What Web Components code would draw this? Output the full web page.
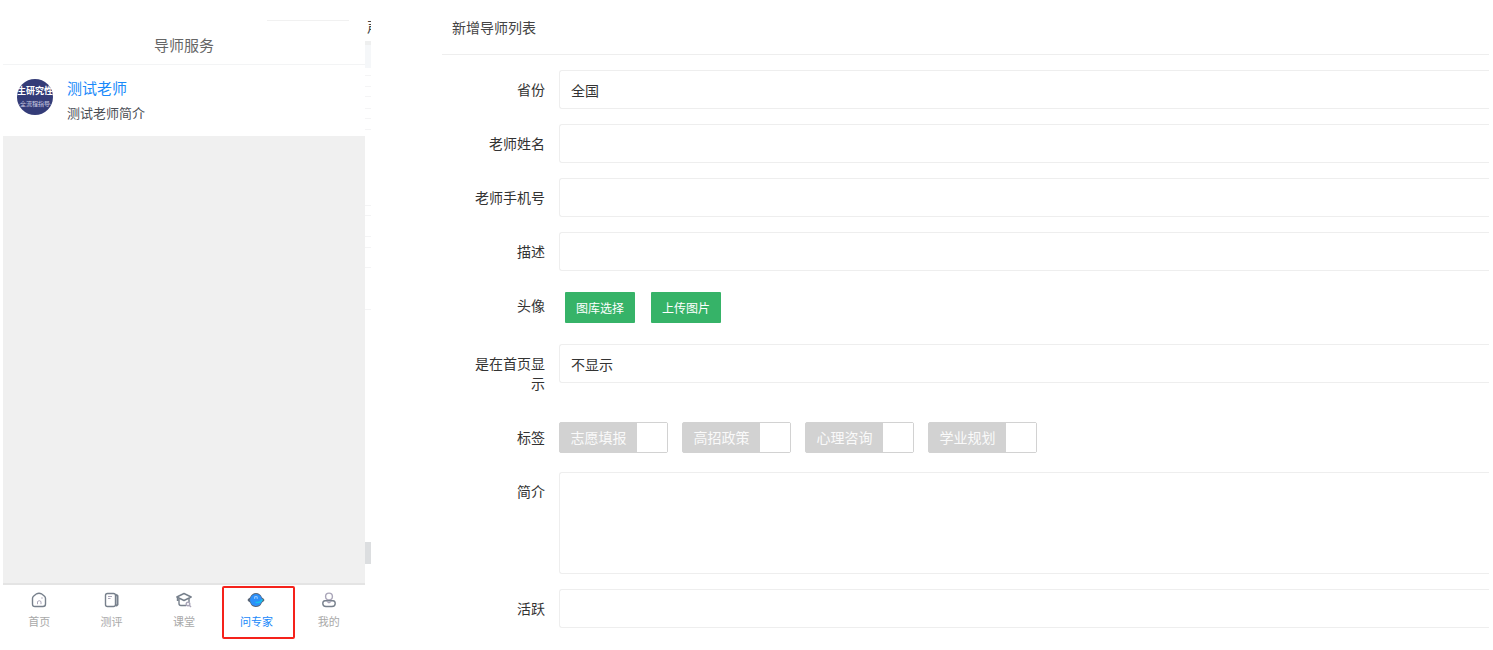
<!DOCTYPE html>
<html lang="zh-CN">
<head>
<meta charset="utf-8">
<title>导师服务</title>
<style>
body { margin: 0; background: #fff; font-family: "Noto Sans CJK SC", sans-serif; }
</style>
</head>
<body>
<mentor-page></mentor-page>
<script>
const define = (name, html, setup) => {
  const template = document.createElement('template');
  template.innerHTML = html;
  customElements.define(name, class extends HTMLElement {
    constructor() {
      super();
      this.attachShadow({ mode: 'open' }).append(template.content.cloneNode(true));
    }
    connectedCallback() { if (setup) setup(this, this.shadowRoot); }
  });
};

define('mentor-card', `
<style>
:host { display: flex; gap: 14px; height: 71px; padding: 12px 14px 0; box-sizing: border-box; background: #fff; }
svg { width: 36px; height: 36px; flex: none; margin-top: 2px; }
a { display: block; font-size: 15px; line-height: 22px; color: #1989fa; text-decoration: none; }
p { margin: 3px 0 0; font-size: 13px; line-height: 22px; color: #4a4e54; }
</style>
<svg viewBox="0 0 36 36" role="img" aria-label="头像">
  <defs><clipPath id="c"><circle cx="18" cy="18" r="18"/></clipPath></defs>
  <g clip-path="url(#c)" fill="#fff" font-family="Noto Sans CJK SC, sans-serif" text-anchor="middle">
    <rect width="36" height="36" fill="#343c78"/>
    <text x="18" y="15" font-size="9" font-weight="700">生研究性</text>
    <text x="18" y="27" font-size="6" fill="#c9cbe2">-全流程指导-</text>
  </g>
</svg>
<div><a href="#mentor"><slot name="name"></slot></a><p><slot></slot></p></div>`);

define('tab-item', `
<style>
:host { display: block; position: relative; flex: 1; min-width: 0; color: #a9a9a9; }
:host([current]) { color: #1989fa; }
/* frame drawn over the tab, slightly into its right neighbour */
:host([current])::after { content: ""; position: absolute; inset: 1px -2px 11px 2px; border: 2px solid #f5221b; border-radius: 2px; pointer-events: none; }
a { display: flex; flex-direction: column; align-items: center; gap: 4px; padding-top: 6px; color: inherit; text-decoration: none; font-size: 11px; line-height: 16px; }
::slotted(svg) { width: 18px; height: 18px; display: block; }
</style>
<a href="#tab"><slot name="icon"></slot><slot></slot></a>`);

define('mentor-phone', `
<style>
:host { display: flex; flex-direction: column; flex: 0 0 362px; margin-left: 3px; }
header { box-sizing: border-box; height: 65px; border-bottom: 1px solid #f3f4f5; display: flex; flex-direction: column; }
hr { width: 82px; margin: 20px 16px 0 auto; border: 0; border-top: 1px solid #f1f1f1; flex: none; }
h1 { margin: 13px 0 0; font-size: 15px; line-height: 22px; font-weight: 400; color: #666; text-align: center; }
main { flex: 1; background: #f0f0f0; }
nav { display: flex; height: 67px; box-sizing: border-box; background: #fff; border-top: 2px solid #e4e4e4; }
</style>
<header><hr><h1>导师服务</h1></header>
<main><mentor-card><span slot="name">测试老师</span>测试老师简介</mentor-card></main>
<nav>
  <tab-item><svg slot="icon" viewBox="0 0 18 18" fill="none" stroke="#77808c" stroke-width="1.400"><path d="M2.500 7.400Q2.500 6.200 3.500 5.200L6.500 2.800Q9 1.700 11.500 2.800L14.500 5.200Q15.500 6.200 15.500 7.400V13Q15.500 15.500 13 15.500H5Q2.500 15.500 2.500 13Z"/><path d="M7.500 13.200V10.500Q9.200 8.800 11 10.500V13.200M11.200 7H12.800" stroke="#aaa6b9" stroke-width="1"/></svg>首页</tab-item>
  <tab-item><svg slot="icon" viewBox="0 0 18 18" fill="none" stroke="#77808c" stroke-width="1.400"><rect x="2.500" y="2.500" width="10" height="13" rx="2"/><path d="M13 3.500L14.500 5V13.500L13 15" stroke-width="2"/><path d="M5 5.500H9M5 7.500H7.500" stroke="#aaa6b9" stroke-width="1"/></svg>测评</tab-item>
  <tab-item><svg slot="icon" viewBox="0 0 18 18" fill="none" stroke="#77808c" stroke-width="1.400" stroke-linejoin="round"><path d="M1.800 6L9 2.500L16.200 6L9 9.500Z"/><path d="M4 7.500V12.500Q4 14.500 6 14.500H11M14 7V11M2.500 7V10"/><circle cx="13" cy="13" r="1.800" stroke="#aaa6b9"/><path d="M14.300 14.300L16 16" stroke="#aaa6b9"/></svg>课堂</tab-item>
  <tab-item current><svg slot="icon" viewBox="0 0 18 18"><path d="M.5 9Q.8 7.800 3 6.600Q4.800 2 9 2Q13.200 2 15 6.600Q17.200 7.800 17.500 9Q17.200 10.200 15 11.400Q13.200 16 9 16Q4.800 16 3 11.400Q.8 10.200 .5 9Z" fill="#596678"/><circle cx="9" cy="9" r="6" fill="#2c90fa"/><path d="M7.700 7.900V5.700H10.200V7.900" fill="none" stroke="#a3cefb"/><path d="M8.500 11.200Q13.500 12.500 15.500 8.200" fill="none" stroke="#19c3ec" stroke-width="1.500"/></svg>问专家</tab-item>
  <tab-item><svg slot="icon" viewBox="0 0 18 18" fill="none" stroke-width="1.400"><circle cx="9" cy="5.500" r="3.400" stroke="#aaa6b9"/><path d="M5 9.800Q2.800 10 2.800 12.500Q2.800 15.500 6 15.500H12Q15.200 15.500 15.200 12.500Q15.200 10 13 9.800Z" stroke="#77808c"/><path d="M7 10Q9 13.500 11 10" stroke="#aaa6b9"/></svg>我的</tab-item>
</nav>`);

define('page-sliver', `
<style>
:host { display: block; flex: 0 0 6px; width: 6px; overflow: hidden; }
span { display: block; padding: 16px 0 0 2px; width: 14px; height: 25px; font-size: 14px; line-height: 20px; color: #444; }
svg { display: block; }
</style>
<span>声</span>
<svg width="6" height="523" viewBox="0 41 6 523" shape-rendering="crispEdges">
  <path d="M0 45H6V68H0Z" fill="#f5f7f9"/><path d="M0 41H6V45H0Z" fill="#eeefef"/>
  <path d="M0 75.500H6M0 86.500H6M0 96.500H6M0 108.500H6M0 118.500H6M0 129.500H6M0 205.500H6M0 215.500H6M0 236.500H6M0 247.500H6M0 267.500H6M0 309.500H6" stroke="#f4f4f5"/>
  <path d="M0 542H6V564H0Z" fill="#dcdee0"/>
</svg>`);

define('form-row', `
<style>
:host { display: grid; grid-template-columns: 103px minmax(0, 1fr); column-gap: 14px; min-height: 39px; }
:host([kind=buttons]) { min-height: 43px; }
:host([kind=buttons]) .field { display: flex; gap: 16px; padding: 6px 0 0 6px; }
:host([kind=tags]) .field { display: flex; gap: 14px; padding-top: 4px; }
label { padding: 9px 0 10px 28px; font-size: 14px; line-height: 20px; color: #333; text-align: right; }
input, select, textarea { display: block; box-sizing: border-box; width: 100%; height: 39px; margin: 0; padding: 0 11px; border: 1px solid #eee; border-right: 0; border-radius: 3px 0 0 3px; background: #fff; font: 14px/20px "Noto Sans CJK SC", sans-serif; color: #333; outline: 0; appearance: none; resize: none; }
textarea { height: 102px; padding: 9px 11px; }
</style>
<label for="control"></label><div class="field"><slot></slot></div>`, (host, root) => {
  const label = root.querySelector('label');
  label.textContent = host.getAttribute('label');
  const kind = host.getAttribute('kind') || 'input';
  if (kind === 'buttons' || kind === 'tags') {
    label.removeAttribute('for');
    label.id = 'caption';
    const field = root.querySelector('.field');
    field.setAttribute('role', 'group');
    field.setAttribute('aria-labelledby', 'caption');
    return;
  }
  const control = document.createElement(kind);
  control.id = 'control';
  if (kind === 'select') control.add(new Option(host.getAttribute('value')));
  root.querySelector('.field').replaceChildren(control);
});

define('green-button', `
<style>
:host { display: block; }
button { display: block; width: 70px; height: 31px; margin: 0; padding: 0; border: 0; border-radius: 1px; background: #36b368; color: #fff; font: 12px/31px "Noto Sans CJK SC", sans-serif; cursor: pointer; }
</style>
<button type="button"><slot></slot></button>`);

define('tag-switch', `
<style>
:host { display: block; }
label { display: flex; box-sizing: border-box; width: 109px; height: 31px; border: 1px solid #d2d2d2; border-radius: 2px; background: #d2d2d2; color: #fafafa; font-size: 14px; line-height: 28px; cursor: pointer; }
span { flex: 1; text-align: center; }
input { appearance: none; width: 30px; height: 29px; margin: 0; background: #fff; order: 1; }
label:has(input:checked) { background: #36b368; border-color: #36b368; }
</style>
<label><input type="checkbox"><span><slot></slot></span></label>`);

define('mentor-form', `
<style>
:host { display: block; flex: 1; min-width: 0; margin: 0 4px 0 71px; }
h2 { margin: 0; box-sizing: border-box; height: 55px; padding: 17px 10px 0; border-bottom: 1px solid #eee; font-size: 14px; line-height: 20px; font-weight: 400; color: #444; }
form { display: flex; flex-direction: column; gap: 15px; padding: 15px 0; }
</style>
<h2>新增导师列表</h2>
<form>
  <form-row label="省份" kind="select" value="全国"></form-row>
  <form-row label="老师姓名"></form-row>
  <form-row label="老师手机号"></form-row>
  <form-row label="描述"></form-row>
  <form-row label="头像" kind="buttons"><green-button>图库选择</green-button><green-button>上传图片</green-button></form-row>
  <form-row label="是在首页显示" kind="select" value="不显示"></form-row>
  <form-row label="标签" kind="tags"><tag-switch>志愿填报</tag-switch><tag-switch>高招政策</tag-switch><tag-switch>心理咨询</tag-switch><tag-switch>学业规划</tag-switch></form-row>
  <form-row label="简介" kind="textarea"></form-row>
  <form-row label="活跃"></form-row>
</form>`);

define('mentor-page', `
<style>
:host { display: flex; min-height: 100vh; }
</style>
<mentor-phone></mentor-phone><page-sliver></page-sliver><mentor-form></mentor-form>`);
</script>
</body>
</html>
